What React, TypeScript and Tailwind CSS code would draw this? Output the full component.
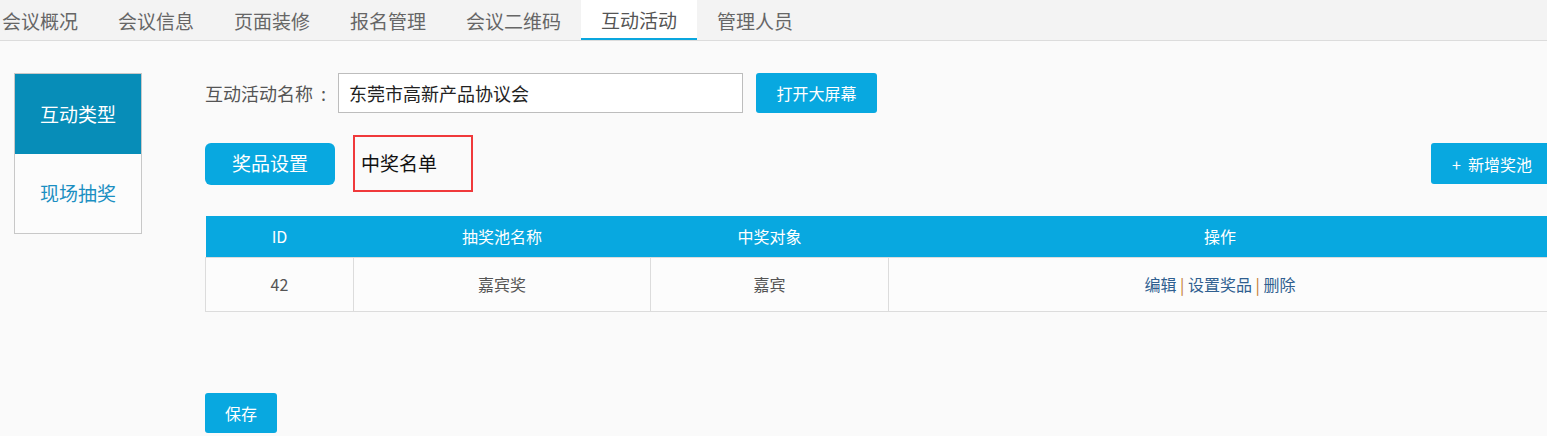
import React from 'react';

const TABS = ['会议概况', '会议信息', '页面装修', '报名管理', '会议二维码', '互动活动', '管理人员'];

const font = { fontFamily: '"Microsoft YaHei", "Noto Sans CJK SC", "Liberation Sans", sans-serif' };

export default function App() {
  return (
    <div className="h-[436px] w-[1547px] overflow-hidden bg-[#fafafa] text-[#555]" style={font}>
      {/* Top tabs */}
      <div className="flex h-[41px] border-b border-[#dcdcdc] bg-[#f3f3f3]">
        {TABS.map((t, i) => {
          const active = t === '互动活动';
          return (
            <div
              key={t}
              className={
                'flex h-[40px] items-center text-[19px] leading-none ' +
                (i === 0 ? 'pl-[2px] pr-[20px] ' : 'px-[20px] ') +
                (active ? 'border-b-2 border-[#0aa6de] bg-white text-[#555]' : 'text-[#666]')
              }
            >
              {t}
            </div>
          );
        })}
      </div>

      <div className="flex pt-[32px]">
        {/* Side menu */}
        <div className="ml-[14px] mr-[63px] flex h-[161px] w-[128px] shrink-0 flex-col border border-[#c8c8c8]">
          <div className="flex h-[80px] items-center justify-center bg-[#078db8] text-[19px] text-white">互动类型</div>
          <div className="flex h-[79px] items-center justify-center bg-[#fcfcfc] text-[19px] text-[#1b8fc2]">现场抽奖</div>
        </div>

        {/* Content */}
        <div className="flex w-[1347px] shrink-0 flex-col">
          <div className="flex h-[40px] items-center">
            <span className="flex w-[133px] items-center text-[18px] text-[#555]">
              互动活动名称<span className="ml-[8px]">:</span>
            </span>
            <div className="flex h-[40px] w-[405px] items-center border border-[#bdbdbd] bg-white px-[10px] text-[18px] text-[#222]">
              东莞市高新产品协议会
            </div>
            <button className="ml-[13px] h-[40px] w-[121px] rounded-[3px] bg-[#08a8e0] text-[16px] text-white">打开大屏幕</button>
          </div>

          <div className="mt-[22px] flex items-center">
            <button className="h-[42px] w-[130px] rounded-[6px] bg-[#08a8e0] text-[19px] text-white">奖品设置</button>
            <div className="ml-[18px] flex h-[57px] w-[120px] items-center border-2 border-[#f0393b] pl-[6px] text-[19px] text-[#111]">
              中奖名单
            </div>
            <button className="ml-auto mr-[-10px] flex h-[41px] w-[131px] items-center rounded-[3px] bg-[#08a8e0] pl-[21px] text-[16px] text-white">
              +&nbsp;&nbsp;新增奖池
            </button>
          </div>

          <table className="mt-[24px] w-full border-collapse text-center text-[16px]">
            <thead>
              <tr className="h-[41px] bg-[#08a8e0] text-white">
                <th className="w-[148px] font-normal">ID</th>
                <th className="w-[297px] font-normal">抽奖池名称</th>
                <th className="w-[238px] font-normal">中奖对象</th>
                <th className="font-normal">操作</th>
              </tr>
            </thead>
            <tbody>
              <tr className="h-[54px] bg-[#fcfcfc] text-[#555]">
                <td className="border border-[#dcdcdc]">42</td>
                <td className="border border-[#dcdcdc]">嘉宾奖</td>
                <td className="border border-[#dcdcdc]">嘉宾</td>
                <td className="border border-[#dcdcdc] text-[#2f5f90]">
                  编辑 <span className="text-[#c47a2c]">|</span> 设置奖品 <span className="text-[#c47a2c]">|</span> 删除
                </td>
              </tr>
            </tbody>
          </table>

          <button className="mt-[81px] h-[40px] w-[72px] rounded-[3px] bg-[#08a8e0] text-[16px] text-white">保存</button>
        </div>
      </div>
    </div>
  );
}
